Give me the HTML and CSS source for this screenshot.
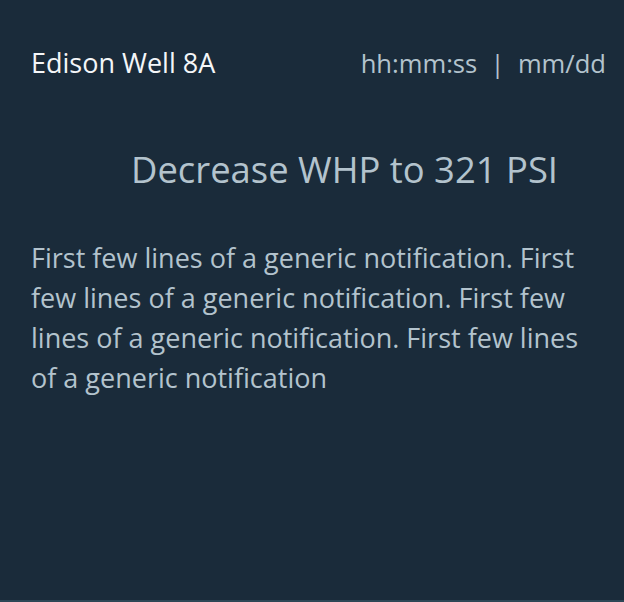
FILE: index.html
```html
<!DOCTYPE html>
<html>
<head>
<meta charset="utf-8">
<link rel="stylesheet" href="styles.css">
</head>
<body>
<div class="card">
  <div class="header">
    <div class="site">Edison Well 8A</div>
    <div class="stamp">hh:mm:ss&nbsp;&nbsp;|&nbsp;&nbsp;mm/dd</div>
  </div>
  <div class="title">Decrease WHP to 321 PSI</div>
  <p class="body">First few lines of a generic notification. First few lines of a generic notification. First few lines of a generic notification. First few lines of a generic notification</p>
</div>
</body>
</html>
```

FILE: styles.css
```css
html, body {
  margin: 0;
  padding: 0;
  background: #1a2b3a;
}
.card {
  width: 624px;
  height: 602px;
  box-sizing: border-box;
  border-bottom: 2px solid #2d4756;
  background: #1a2b3a;
  padding: 0 18px 0 31px;
  font-family: "Open Sans", "Noto Sans", sans-serif;
}
.header {
  display: flex;
  justify-content: space-between;
  align-items: baseline;
  padding-top: 45px;
}
.site {
  color: #f4f6f8;
  font-size: 27px;
  line-height: 36px;
}
.stamp {
  color: #b3c3cd;
  font-size: 25.6px;
  line-height: 36px;
}
.title {
  color: #b3c3cd;
  font-size: 36.4px;
  line-height: 48px;
  margin-top: 63px;
  padding-left: 100px;
}
.body {
  color: #b3c3cd;
  font-size: 27px;
  line-height: 40px;
  margin: 45px 15px 0 0;
}
```
